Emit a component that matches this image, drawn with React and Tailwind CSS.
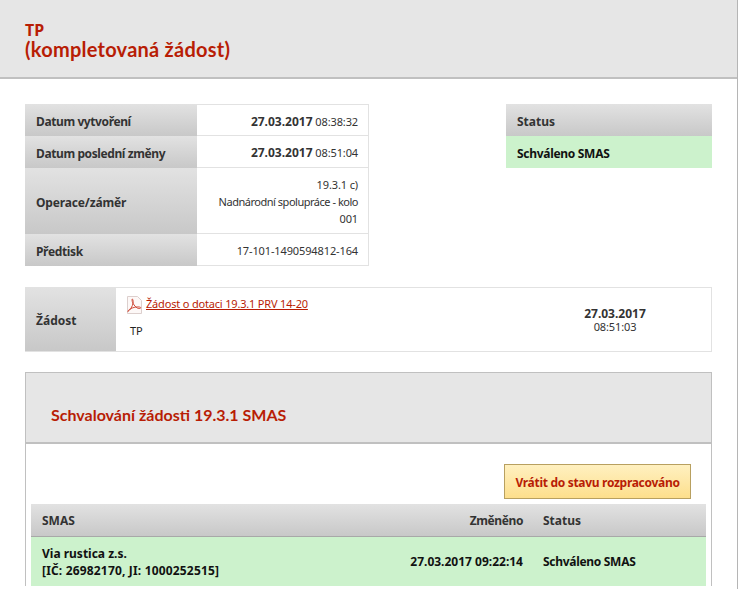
import React from "react";

const gradient = "bg-gradient-to-b from-[#e2e2e2] to-[#c8c8c8]";
const reg = "font-normal text-[11px] tracking-[-0.12px]";

function InfoRow({ label, track, first, children }) {
  return (
    <div className="flex h-full">
      <div className={`w-[172px] shrink-0 ${gradient} flex items-center pl-[11px] pt-[2px] font-bold text-[#333333] ${track}`}>
        {label}
      </div>
      <div className={`flex-1 flex items-center justify-end text-right whitespace-nowrap pr-[10px] pt-[2px] border-b border-r border-[#e2e2e2] text-[#333333] ${reg} ${first ? "border-t" : ""}`}>
        <div>{children}</div>
      </div>
    </div>
  );
}

function PdfIcon() {
  return (
    <svg width="15" height="18" viewBox="0 0 15 18" className="shrink-0">
      <path d="M0.5 0.5H10.5L14.5 4.5V17.5H0.5Z" fill="#fdf8f7" stroke="#dccfcd" />
      <path d="M0.8 15.5C3 14.3 5.5 10.8 6.2 6.5C6.4 4.5 5.3 1.8 5 3.5C4.8 5.5 6.8 10 10.2 12C11.7 12.8 14.2 12.6 13.7 11.6C13.2 10.7 9.2 10.6 5.8 11.8C3.4 12.6 1.2 14 0.8 15.5Z" fill="none" stroke="#cf4a38" strokeWidth="1" />
    </svg>
  );
}

export default function App() {
  return (
    <div className="w-[740px] h-[589px] overflow-hidden bg-white text-[12px] leading-[17px] font-['Noto_Sans',sans-serif] text-[#333333]">
      <div className="w-[738px] h-full border-r border-[#b5b5b5]">
        <header className="h-[79px] bg-[#e6e6e6] border-b-2 border-[#c0c0c0] pl-[25px] pt-[21px] font-['Lato',sans-serif] text-[20px] leading-[18px] font-bold tracking-[0.25px] text-[#b81d05]">
          <div className="font-['Noto_Sans',sans-serif] text-[16px] tracking-normal">TP</div>
          <div className="mt-px">(kompletovaná žádost)</div>
        </header>

        <div className="flex justify-between items-start pl-[25px] pr-[25px] pt-[25px]">
          <div className="w-[344px] grid grid-rows-[32px_32px_66px_32px]">
            <InfoRow first label="Datum vytvoření" track="tracking-[-0.4px]"><b className="text-[12px] tracking-normal">27.03.2017</b> 08:38:32</InfoRow>
            <InfoRow label="Datum poslední změny" track="tracking-[-0.4px]"><b className="text-[12px] tracking-normal">27.03.2017</b> 08:51:04</InfoRow>
            <InfoRow label="Operace/záměr" track="tracking-[-0.15px]">19.3.1 c)<br /><span className="tracking-[-0.48px]">Nadnárodní spolupráce - kolo</span><br />001</InfoRow>
            <InfoRow label="Předtisk" track="tracking-[-0.35px]">17-101-1490594812-164</InfoRow>
          </div>
          <div className="w-[206px] font-bold">
            <div className={`h-[32px] ${gradient} flex items-center pl-[11px] pt-[2px]`}>Status</div>
            <div className="h-[32px] bg-[#ccf2cc] flex items-center pl-[11px] pt-[2px] text-[#111111] tracking-[-0.3px]">Schváleno SMAS</div>
          </div>
        </div>

        <div className="ml-[25px] mr-[25px] mt-[21px] h-[65px] flex border border-l-0 border-[#e2e2e2]">
          <div className={`w-[91px] shrink-0 ${gradient} flex items-center pl-[11px] pt-px font-bold`}>Žádost</div>
          <div className={`flex-1 pl-[11px] pt-[8px] ${reg}`}>
            <div className="flex items-start gap-[4px]">
              <PdfIcon />
              <a href="#" className="underline text-[#b81d05] leading-[16px] tracking-[-0.18px]">Žádost o dotaci 19.3.1 PRV 14-20</a>
            </div>
            <div className="pl-[3px] mt-[8px] text-[#222222]">TP</div>
          </div>
          <div className="w-[190px] shrink-0 flex flex-col justify-center items-center leading-[13px] pr-[2px] pt-px">
            <b>27.03.2017</b>
            <span className={reg}>08:51:03</span>
          </div>
        </div>

        <section className="ml-[25px] mr-[25px] mt-[20px] border-x border-t border-[#c0c0c0]">
          <div className="h-[71px] bg-[#e6e6e6] border-b-2 border-[#c0c0c0] pl-[25px] pt-[30px] font-['Lato',sans-serif] text-[16px] leading-[24px] font-bold text-[#b81d05]">
            Schvalování žádosti 19.3.1 SMAS
          </div>
          <div className="px-[5px] pt-[20px]">
            <div className="flex justify-end pr-[15px]">
              <button className="h-[35px] w-[187px] pt-px bg-gradient-to-b from-[#fff0c0] to-[#fddf8c] border border-[#b8a060] font-bold text-[#b81d05] tracking-[-0.3px]">
                Vrátit do stavu rozpracováno
              </button>
            </div>
            <div className={`mt-[5px] h-[33px] pt-px ${gradient} border-b border-[#a8a8a8] flex items-center font-bold`}>
              <div className="flex-1 pl-[11px]">SMAS</div>
              <div className="pr-[20px] tracking-[-0.4px]">Změněno</div>
              <div className="w-[163px]">Status</div>
            </div>
            <div className="h-[49px] bg-[#ccf2cc] flex items-center font-bold text-[#111111]">
              <div className="flex-1 pl-[11px]">Via rustica z.s.<br /><span className="tracking-[0.17px]">[IČ: 26982170, JI: 1000252515]</span></div>
              <div className="pr-[20px]">27.03.2017 09:22:14</div>
              <div className="w-[163px] tracking-[-0.3px]">Schváleno SMAS</div>
            </div>
          </div>
        </section>
      </div>
    </div>
  );
}
